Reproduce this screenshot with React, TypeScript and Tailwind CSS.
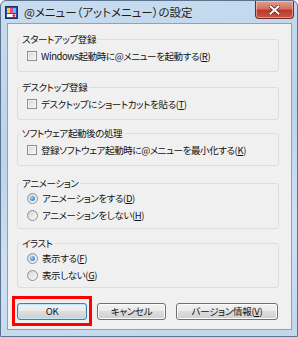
import React from "react";

function CheckBox() {
  return (
    <span className="inline-block w-[10px] h-[10px] shrink-0 border border-[#8e8f8f] bg-gradient-to-br from-[#d6d6d6] to-[#fafafa] shadow-[inset_0_0_0_1px_#f2f2f2]" />
  );
}

function Radio({ checked }: { checked?: boolean }) {
  return (
    <span className="flex items-center justify-center w-[11px] h-[11px] shrink-0 rounded-full border border-[#8e8f8f] bg-gradient-to-br from-[#d4d4d4] to-[#fbfbfb]">
      {checked && (
        <span className="w-[5px] h-[5px] rounded-full bg-[radial-gradient(circle_at_35%_35%,#9ad8ff,#1d5fa6)]" />
      )}
    </span>
  );
}

function Mn({ k }: { k: string }) {
  return (
    <>
      (<span className="underline underline-offset-1">{k}</span>)
    </>
  );
}

function Group({
  title,
  className,
  children,
}: {
  title: string;
  className: string;
  children: React.ReactNode;
}) {
  return (
    <fieldset
      className={`w-[262px] border border-[#d5dfe5] rounded-[3px] px-0 ${className}`}
    >
      <legend className="ml-[2px] px-[2px] leading-[14px]">{title}</legend>
      {children}
    </fieldset>
  );
}

function Row({ children }: { children: React.ReactNode }) {
  return (
    <div className="flex items-center gap-[4px] pl-[9px] h-[16px] leading-[16px]">
      {children}
    </div>
  );
}

function Button({
  children,
  isDefault,
  className,
}: {
  children: React.ReactNode;
  isDefault?: boolean;
  className: string;
}) {
  return (
    <button
      className={`h-[17px] rounded-[3px] border bg-[linear-gradient(#f2f2f2,#ebebeb_45%,#dddddd_50%,#cfcfcf)] text-[9.5px] tracking-[-0.3px] leading-[15px] text-[#111] ${
        isDefault
          ? "border-[#3c7fb1] shadow-[inset_0_0_0_1px_#bfe6fb]"
          : "border-[#707070] shadow-[inset_0_0_0_1px_#fcfcfc]"
      } ${className}`}
    >
      {children}
    </button>
  );
}

export default function App() {
  return (
    <div className="w-[298px] h-[337px] flex flex-col rounded-t-[6px] border border-[#5b7591] bg-[linear-gradient(170deg,#c9dcef,#bcd3ea_40%,#cfe0f1_70%,#c2d7ec)] font-['Noto_Sans_CJK_JP',sans-serif] [font-feature-settings:'palt'] text-[#111] overflow-hidden">
      {/* Title bar */}
      <div className="h-[22px] flex items-start shrink-0">
        <svg width="13" height="13" viewBox="0 0 13 13" className="mt-[5px] ml-[4px]">
          <rect x="0.5" y="0.5" width="12" height="12" fill="#2b4fa8" stroke="#1a2f6a" />
          <rect x="2" y="2" width="3" height="5" fill="#f5d22a" />
          <rect x="5" y="2" width="3" height="5" fill="#e54b9a" />
          <rect x="8" y="2" width="3" height="5" fill="#4cc3e8" />
          <rect x="2" y="8" width="9" height="3" fill="#ffffff" />
          <circle cx="9" cy="9.5" r="1.5" fill="#e03030" />
        </svg>
        <div className="ml-[6px] mt-[3px] text-[11.5px] leading-[16px] text-[#1e1e1e]">
          @メニュー（アットメニュー）の設定
        </div>
        <div className="ml-auto mr-[3px] w-[39px] h-[18px] rounded-b-[4px] border border-t-0 border-[#6b2a2a] bg-[linear-gradient(#e39e90,#d37262_45%,#b93a2b_55%,#cc5542)] flex items-center justify-center shadow-[inset_0_0_0_1px_rgba(255,220,210,0.5)]">
          <svg width="11" height="10" viewBox="0 0 11 10">
            <path
              d="M1.5 1.5 L9.5 8.5 M9.5 1.5 L1.5 8.5"
              stroke="#5a1f1a"
              strokeWidth="3.6"
              strokeLinecap="square"
            />
            <path
              d="M1.5 1.5 L9.5 8.5 M9.5 1.5 L1.5 8.5"
              stroke="#ffffff"
              strokeWidth="2"
              strokeLinecap="square"
            />
          </svg>
        </div>
      </div>

      {/* Client area */}
      <div className="ml-[6px] mr-[5px] mb-[6px] flex-1 border border-[#8ea2b6] bg-[#f0f0f0] pl-[9px] flex flex-col text-[9.5px] tracking-[-0.4px]">
        <Group title="スタートアップ登録" className="mt-[8px] pt-[2px] pb-[7px]">
          <Row>
            <CheckBox />
            <span>
              Windows起動時に@メニューを起動する<Mn k="R" />
            </span>
          </Row>
        </Group>

        <Group title="デスクトップ登録" className="mt-[8px] pt-[2px] pb-[7px]">
          <Row>
            <CheckBox />
            <span>
              デスクトップにショートカットを貼る<Mn k="T" />
            </span>
          </Row>
        </Group>

        <Group title="ソフトウェア起動後の処理" className="mt-[6px] pt-[2px] pb-[7px]">
          <Row>
            <CheckBox />
            <span>
              登録ソフトウェア起動時に@メニューを最小化する<Mn k="K" />
            </span>
          </Row>
        </Group>

        <Group title="アニメーション" className="mt-[10px] pt-0 pb-[5px]">
          <div className="flex flex-col gap-[1px]">
            <Row>
              <Radio checked />
              <span>
                アニメーションをする<Mn k="D" />
              </span>
            </Row>
            <Row>
              <Radio />
              <span>
                アニメーションをしない<Mn k="H" />
              </span>
            </Row>
          </div>
        </Group>

        <Group title="イラスト" className="mt-[7px] pt-0 pb-[4px]">
          <div className="flex flex-col gap-[1px]">
            <Row>
              <Radio checked />
              <span>
                表示する<Mn k="F" />
              </span>
            </Row>
            <Row>
              <Radio />
              <span>
                表示しない<Mn k="G" />
              </span>
            </Row>
          </div>
        </Group>

        <div className="mt-[15px] flex gap-[10px]">
          <div className="relative">
            <Button isDefault className="w-[70px]">
              OK
            </Button>
            {/* red highlight frame */}
            <div className="absolute left-[-5px] right-[-5px] top-[-7px] bottom-[-6px] border-[3px] border-[#ff0000]" />
          </div>
          <Button className="w-[69px]">キャンセル</Button>
          <Button className="w-[102px]">
            バージョン情報<Mn k="V" />
          </Button>
        </div>
      </div>
    </div>
  );
}
